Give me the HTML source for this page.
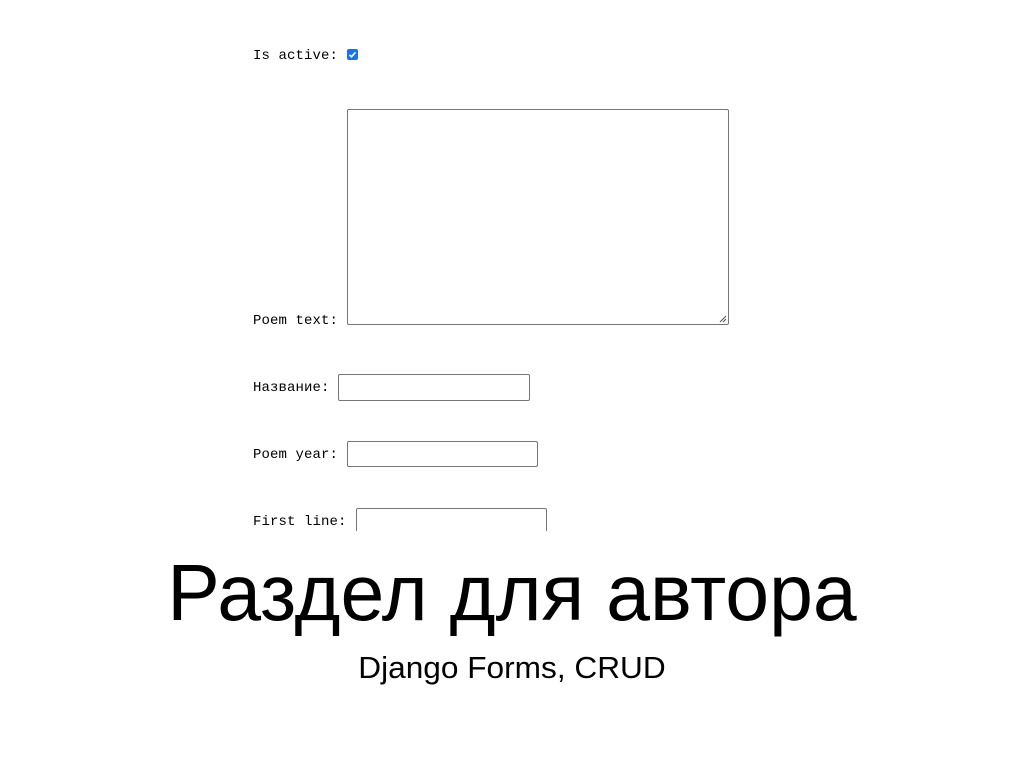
<!DOCTYPE html>
<html><head><meta charset="utf-8"><style>
body{margin:0;width:1024px;height:768px;background:#fff;position:relative;overflow:hidden}
.l{position:absolute;font-family:"Liberation Mono",monospace;font-size:14px;color:#000;left:253px;letter-spacing:0.1px}
.b{position:absolute;border:1px solid #767676;border-radius:2px;background:#fff;box-sizing:border-box}
.t{position:absolute;left:0;width:1024px;text-align:center;font-family:"Liberation Sans",sans-serif;color:#000}
</style></head><body>
<div class="l" style="top:48px">Is active:</div>
<div style="position:absolute;left:347px;top:49px;width:11px;height:11px;background:#1a73e8;border-radius:2px"><svg width="11" height="11" viewBox="0 0 11 11" style="position:absolute;left:0;top:0"><path d="M2.5 5.8 L4.5 7.8 L8.5 3.3" stroke="#fff" stroke-width="1.6" fill="none"/></svg></div>
<div class="b" style="left:347px;top:109px;width:382px;height:216px"><svg width="8" height="8" style="position:absolute;right:1px;bottom:1px"><path d="M7 1L1 7M7 4L4 7" stroke="#555" stroke-width="1"/></svg></div>
<div class="l" style="top:313px">Poem text:</div>
<div class="l" style="top:380px">Название:</div>
<div class="b" style="left:338px;top:374px;width:192px;height:27px"></div>
<div class="l" style="top:447px">Poem year:</div>
<div class="b" style="left:347px;top:441px;width:191px;height:26px"></div>
<div class="l" style="top:514px">First line:</div>
<div class="b" style="left:356px;top:508px;width:191px;height:30px;border-bottom:none"></div>
<div style="position:absolute;left:0;top:531px;width:1024px;height:20px;background:#fff"></div>
<div class="t" style="top:548px;font-size:80px;line-height:90px;transform:scaleX(0.985)">Раздел для автора</div>
<div class="t" style="top:648px;font-size:31px;line-height:40px;transform:scaleX(1.02)">Django Forms, CRUD</div>
</body></html>
